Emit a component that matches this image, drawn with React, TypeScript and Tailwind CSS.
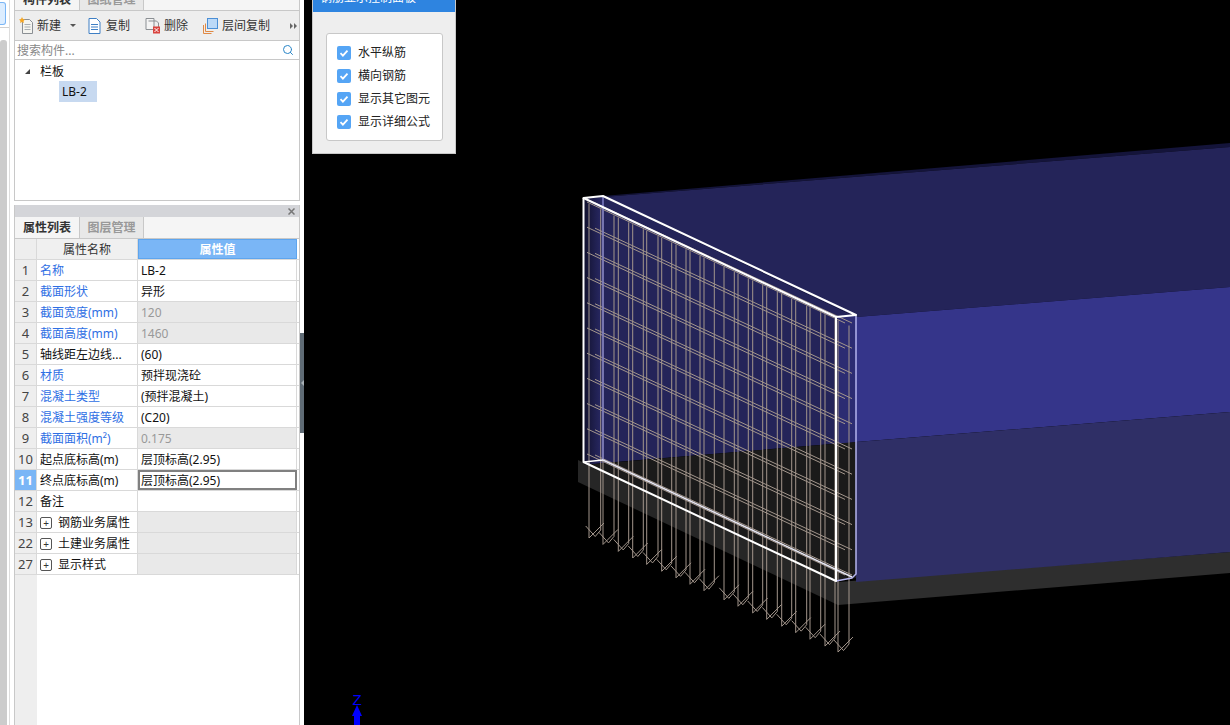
import type { ReactNode } from "react";
import { Search } from "lucide-react";

type Row = { no: string; name: string; value?: string; blue?: boolean; muted?: boolean; group?: boolean; active?: boolean };

const rows: Row[] = [
  { no: "1", name: "名称", value: "LB-2", blue: true },
  { no: "2", name: "截面形状", value: "异形", blue: true },
  { no: "3", name: "截面宽度(mm)", value: "120", blue: true, muted: true },
  { no: "4", name: "截面高度(mm)", value: "1460", blue: true, muted: true },
  { no: "5", name: "轴线距左边线...", value: "(60)" },
  { no: "6", name: "材质", value: "预拌现浇砼", blue: true },
  { no: "7", name: "混凝土类型", value: "(预拌混凝土)", blue: true },
  { no: "8", name: "混凝土强度等级", value: "(C20)", blue: true },
  { no: "9", name: "截面面积(m²)", value: "0.175", blue: true, muted: true },
  { no: "10", name: "起点底标高(m)", value: "层顶标高(2.95)" },
  { no: "11", name: "终点底标高(m)", value: "层顶标高(2.95)", active: true },
  { no: "12", name: "备注" },
  { no: "13", name: "钢筋业务属性", group: true },
  { no: "22", name: "土建业务属性", group: true },
  { no: "27", name: "显示样式", group: true },
];

const checks = ["水平纵筋", "横向钢筋", "显示其它图元", "显示详细公式"];

const NewIcon = () => (
  <svg width="16" height="18" viewBox="0 0 16 18" className="shrink-0">
    <path d="M3.5 2.5h7l3 3v11h-10z" fill="#f4f4f0" stroke="#8a8f94" />
    <path d="M5.5 7.5h6M5.500 10h6M5.500 12.500h6" stroke="#a8adb2" />
    <path d="M3 0l1 2 2 .5-1.500 1.500.5 2-2-1-2 1 .5-2L0 2.500 2 2z" fill="#f5a623" />
  </svg>
);

const CopyIcon = () => (
  <svg width="13" height="16" viewBox="0 0 13 16" className="shrink-0">
    <path d="M1 .5h7.500l3.500 3.500v11.500H1z" fill="#fff" stroke="#3f7fc4" />
    <path d="M3 6.500h7M3 9h7M3 11.500h7" stroke="#3f7fc4" />
  </svg>
);

const DeleteIcon = () => (
  <svg width="16" height="16" viewBox="0 0 16 16" className="shrink-0">
    <path d="M1 .5h8v11H1z" fill="#f4f4f4" stroke="#8b8f93" />
    <path d="M3.500 3h8l2 2v4" fill="none" stroke="#8b8f93" />
    <rect x="8" y="8.500" width="7" height="7" fill="#d9443f" />
    <path d="M9.500 10l4 4M13.500 10l-4 4" stroke="#fff" />
  </svg>
);

const LayerCopyIcon = () => (
  <svg width="15" height="16" viewBox="0 0 15 16" className="shrink-0">
    <path d="M.5 7v8.500h8M2.500 5.500v8h8" fill="none" stroke="#e08a45" />
    <rect x="4.500" y=".5" width="10" height="10" fill="#bcd9f7" stroke="#4b8fd6" />
  </svg>
);

const ToolItem = ({ icon, label, left, gap }: { icon: ReactNode; label: string; left: string; gap: string }) => (
  <div className={`flex shrink-0 items-center whitespace-nowrap ${left}`}>
    {icon}
    <span className={gap}>{label}</span>
  </div>
);

const LeftStrip = () => (
  <div className="flex w-[14px] shrink-0">
    <div className="w-[9px] shrink-0 border-r border-[#dddddd] box-content">
      <div className="flex h-[40px] flex-col items-start pt-[2px]">
        <div className="h-[23px] w-[6px] rounded-r-[3px] border border-l-0 border-[#7ab6f6] bg-[#dcedff]" />
        <div className="mt-[2px] h-px w-full bg-[#cfcfcf]" />
      </div>
      <div className="h-[685px] w-[7px] rounded-t-[3px] bg-[#cccccc]" />
    </div>
  </div>
);

const ComponentPanel = () => (
  <div className="flex h-[201px] flex-col border-x border-b border-[#c8c8c8] bg-white">
    <div className="flex h-[11px] items-end overflow-hidden border-b border-[#c8c8c8] bg-[#f5f5f5]">
      <div className="flex h-[21px] w-[65px] shrink-0 items-center justify-center border-r border-[#c8c8c8] font-bold text-[#333]">构件列表</div>
      <div className="flex h-[21px] w-[64px] shrink-0 items-center justify-center border-r border-[#c8c8c8] bg-[#e8e8e8] font-bold text-[#999]">图纸管理</div>
    </div>
    <div className="flex h-[30px] items-center border-b border-[#c8c8c8] bg-[#eeeeee] pl-[4px] text-[#333]">
      <ToolItem icon={<NewIcon />} label="新建" left="" gap="ml-[2px]" />
      <span className="ml-[9px] h-0 w-0 shrink-0 border-x-[3px] border-t-[3px] border-x-transparent border-t-[#555]" />
      <ToolItem icon={<CopyIcon />} label="复制" left="ml-[12px]" gap="ml-[5px]" />
      <ToolItem icon={<DeleteIcon />} label="删除" left="ml-[15px]" gap="ml-[3px]" />
      <ToolItem icon={<LayerCopyIcon />} label="层间复制" left="ml-[15px]" gap="ml-[4px]" />
      <div className="ml-[20px] flex shrink-0 gap-px">
        <span className="h-0 w-0 border-y-[3px] border-l-[3px] border-y-transparent border-l-[#666]" />
        <span className="h-0 w-0 border-y-[3px] border-l-[3px] border-y-transparent border-l-[#666]" />
      </div>
    </div>
    <div className="flex h-[19px] items-center justify-between border-b border-[#c8c8c8] pl-[2px] pr-[5px] text-[#888]">
      <span className="pt-px">搜索构件...</span>
      <Search size={12} strokeWidth={2} className="text-[#2a86c8]" />
    </div>
    <div className="flex h-[21px] items-center pl-[10px] pt-[2px]">
      <span className="h-0 w-0 border-b-[5px] border-l-[5px] border-b-[#444] border-l-transparent" />
      <span className="ml-[10px] text-[#111]">栏板</span>
    </div>
    <div className="ml-[44px] flex h-[21px] w-[38px] items-center bg-[#c7d9f0] pl-[3px] text-[#111]">LB-2</div>
  </div>
);

const PropertyRow = ({ row }: { row: Row }) => (
  <div className="flex h-[21px] border-b border-[#d9d9d9]">
    <div className={`flex w-[22px] shrink-0 items-center justify-center border-r border-[#d9d9d9] pt-px text-[13px] ${row.active ? "bg-[#7ab6f6] font-bold text-white" : "bg-[#eeeeee] text-[#444]"}`}>
      {row.no}
    </div>
    <div className={`flex w-[101px] shrink-0 items-center whitespace-nowrap border-r border-[#d9d9d9] pl-[3px] pt-px ${row.blue ? "text-[#2f6fe4]" : "text-[#111]"}`}>
      {row.group && (
        <span className="mr-[6px] flex h-[12px] w-[12px] items-center justify-center rounded-[2px] border border-[#555] text-[10px] leading-none text-[#333]">+</span>
      )}
      {row.name}
    </div>
    <div className={`flex w-[159px] shrink-0 items-center border-r border-[#d9d9d9] pl-[3px] pt-px ${row.muted ? "bg-[#e9e9e9] text-[#999]" : row.group ? "bg-[#e9e9e9]" : "text-[#111]"} ${row.active ? "outline-2 -outline-offset-2 outline-[#808080]" : ""}`}>
      {row.value}
    </div>
  </div>
);

const PropertyPanel = () => (
  <div className="flex min-h-0 flex-1 flex-col border-x border-[#c8c8c8] bg-white">
    <div className="flex h-[12px] shrink-0 items-center justify-end bg-[#d4d5d9] pr-[4px]">
      <svg width="7" height="7" viewBox="0 0 7 7">
        <path d="M.5.500l6 6M6.500.500l-6 6" stroke="#777" strokeWidth="1.500" />
      </svg>
    </div>
    <div className="flex h-[22px] shrink-0 border-b border-[#c8c8c8] bg-[#f5f5f5]">
      <div className="flex w-[65px] items-center justify-center border-r border-[#c8c8c8] font-bold text-[#333]">属性列表</div>
      <div className="flex w-[64px] items-center justify-center border-r border-[#c8c8c8] bg-[#e8e8e8] font-bold text-[#999]">图层管理</div>
    </div>
    <div className="flex min-h-0 flex-1 flex-col">
      <div className="flex h-[21px] shrink-0 border-b border-[#d9d9d9]">
        <div className="w-[22px] shrink-0 border-r border-[#d9d9d9] bg-[#eeeeee]" />
        <div className="flex w-[101px] shrink-0 items-center justify-center border-r border-[#d9d9d9] bg-[#f0f0f0] pt-px text-[#333]">属性名称</div>
        <div className="flex w-[159px] shrink-0 items-center justify-center border border-[#5ea5ee] bg-[#7ab6f6] pt-px font-bold text-white">属性值</div>
      </div>
      {rows.map((row) => (
        <PropertyRow key={row.no} row={row} />
      ))}
      <div className="w-[22px] flex-1 bg-[#eeeeee]" />
    </div>
  </div>
);

const hLines = Array.from({ length: 11 }, (_, i) => i);

// bars come in pairs, the hooks of a pair cross into an X
const barPairs = [
  [589, 600.7], [603, 614], [618.3, 628.7], [632.7, 643.3], [646.7, 658], [661.7, 671.7],
  [676, 686], [690, 700], [704, 714.3], [724, 734.3], [738, 748.3], [752.7, 762.7],
  [766.7, 777.3], [781.7, 791.7], [795.7, 806.7], [810, 820.7], [825, 835], [838, 849],
];

const barTop = (x: number) => 201 + (x - 583) * 0.468;
const barEnd = (x: number) => 538 + (x - 589) * 0.458;

const Model = () => (
  <svg className="absolute inset-0" width="926" height="725" viewBox="304 0 926 725">
    <defs>
      <linearGradient id="endStrip" x1="0" x2="1" y1="0" y2="0">
        <stop offset="0" stopColor="#12122e" />
        <stop offset="1" stopColor="#2a2a68" />
      </linearGradient>
    </defs>
    {/* slab */}
    <polygon points="578,460 578,482 838,605 838,582" fill="#262626" />
    <polygon points="838,582 838,605 1230,573 1230,552" fill="#2e2e2e" />
    {/* body */}
    <polygon points="603,196 1230,143 1230,147 603,197" fill="#14143a" />
    <polygon points="603,197 1230,147 1230,287 856,317" fill="#242459" />
    <polygon points="856,317 1230,287 1230,412 856,442" fill="#35358a" />
    <polygon points="856,442 1230,412 1230,552 856,582" fill="#2f2f66" />
    {/* wall interior */}
    <polygon points="603,197 856,317 856,442 603,463" fill="#242459" />
    <polygon points="584,198 603,197 603,463 584,465" fill="url(#endStrip)" />
    <polygon points="838,316 856,316 856,442 838,444" fill="#2c2c72" />
    <polygon points="584,465 856,442 856,578 836,581 584,462" fill="#1a1a1a" />
    {/* rebar */}
    <g stroke="#a3968c" strokeWidth="1" fill="none">
      {hLines.map((i) => (
        <g key={i}>
          <line x1="587" y1={202 + i * 25.2} x2="845" y2={323 + i * 25.2} />
          <line x1="595" y1={203 + i * 25.2} x2="852" y2={323 + i * 25.2} />
        </g>
      ))}
      {barPairs.map(([a, b]) => {
        const end = barEnd(a);
        return (
          <g key={a}>
            <polyline points={`${a},${barTop(a)} ${a},${end} ${a + 15},${end - 15}`} />
            <polyline points={`${b},${barTop(b)} ${b},${end - 8} ${b - 5.5},${end - 1.5} ${b - 15},${end - 12}`} />
          </g>
        );
      })}
    </g>
    {/* wall outline */}
    <g fill="none" strokeLinejoin="round">
      <line x1="603" y1="197" x2="603" y2="460" stroke="#7c7cc4" strokeWidth="1.500" />
      <polyline points="856,316 856,574 852,578 836,581" stroke="#b4b4ee" strokeWidth="1.500" />
      <line x1="603" y1="460" x2="852" y2="577" stroke="#e8e8f4" strokeWidth="1.500" />
      <polygon points="583.500,198 603,196 856,315 836,317" stroke="#ffffff" strokeWidth="2" />
      <polyline points="583.500,198 583.500,462 836,581 836,317" stroke="#ffffff" strokeWidth="2" />
      <line x1="583.500" y1="462" x2="603" y2="460" stroke="#ffffff" strokeWidth="1.500" />
    </g>
    {/* axis */}
    <polygon points="357,705 362,716 360,716 360,725 354,725 354,716 352,716" fill="#0000ff" />
    <text x="357" y="705" textAnchor="middle" fill="#0000ff" fontSize="15" fontFamily="Liberation Sans, sans-serif">Z</text>
  </svg>
);

const RebarPanel = () => (
  <div className="absolute left-[8px] top-0 flex h-[154px] w-[144px] flex-col border-x border-b border-[#c8c8c8] bg-[#eeeeee]">
    <div className="flex h-[12px] items-start overflow-hidden bg-[#2e84e0] pl-[7px] text-white">
      <span className="-mt-[8px] leading-[12px]">钢筋显示控制面板</span>
    </div>
    <div className="ml-[13px] mt-[21px] flex h-[108px] w-[117px] flex-col gap-[5px] rounded-[3px] border border-[#c8c8c8] bg-white pl-[10px] pt-[10px]">
      {checks.map((label) => (
        <div key={label} className="flex h-[18px] items-center text-[#222]">
          <span className="flex h-[14px] w-[14px] items-center justify-center rounded-[2px] bg-[#55a5f5]">
            <svg width="10" height="10" viewBox="0 0 10 10">
              <path d="M1.500 5.200l2.400 2.400 4.600-5" fill="none" stroke="#fff" strokeWidth="1.800" />
            </svg>
          </span>
          <span className="ml-[7px]">{label}</span>
        </div>
      ))}
    </div>
  </div>
);

export default function App() {
  return (
    <div className="flex h-[725px] w-[1230px] overflow-hidden bg-white font-['Noto_Sans','Noto_Sans_CJK_SC',sans-serif] text-[12px] leading-none">
      <LeftStrip />
      <div className="flex w-[286px] shrink-0 flex-col">
        <ComponentPanel />
        <div className="h-[4px] shrink-0" />
        <PropertyPanel />
      </div>
      <div className="w-[4px] shrink-0 pt-[333px]">
        <div className="flex h-[100px] items-center justify-end bg-[#5f6b75]">
          <span className="h-0 w-0 border-y-[3px] border-r-[3px] border-y-transparent border-r-[#a8b0b6]" />
        </div>
      </div>
      <div className="relative flex-1 bg-black">
        <Model />
        <RebarPanel />
      </div>
    </div>
  );
}
